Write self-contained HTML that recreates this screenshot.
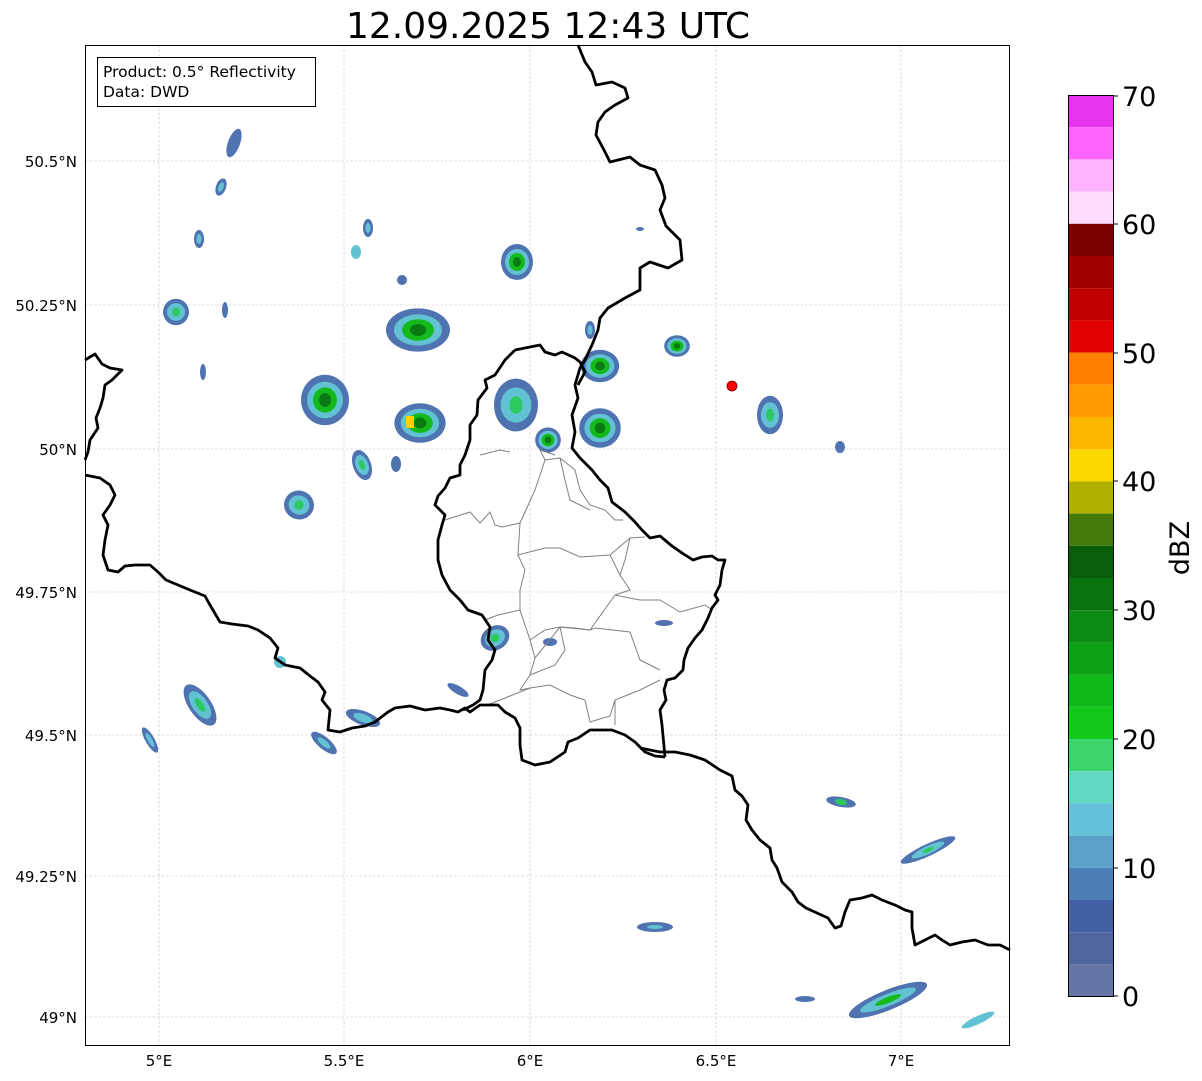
<!DOCTYPE html>
<html><head><meta charset="utf-8"><style>
html,body{margin:0;padding:0;background:#fff;width:1202px;height:1081px;overflow:hidden;font-family:"DejaVu Sans","Liberation Sans",sans-serif}
</style></head><body>
<svg width="1202" height="1081" viewBox="0 0 1202 1081" xmlns="http://www.w3.org/2000/svg" style="position:absolute;left:0;top:0">
<defs>
<g id="b3"><ellipse rx="16" ry="18" fill="#4f72b0"/><ellipse rx="12" ry="13" fill="#62c2d4"/><ellipse rx="8" ry="9" fill="#14b91c"/><ellipse rx="4" ry="5" fill="#0a7a12"/></g>
<g id="b2"><ellipse rx="10" ry="12" fill="#4f72b0"/><ellipse rx="7" ry="8" fill="#62c2d4"/><ellipse rx="3" ry="4" fill="#2cc860"/></g>
<g id="b1"><ellipse rx="5" ry="9" fill="#4f72b0"/><ellipse rx="2.5" ry="5" fill="#62c2d4"/></g>
</defs>
<text x="548" y="38" font-size="36" text-anchor="middle" font-family="DejaVu Sans, sans-serif">12.09.2025 12:43 UTC</text>
<g stroke="#bdbdbd" stroke-width="0.6" stroke-dasharray="2.5,2">
<line x1="159" y1="45" x2="159" y2="1046"/><line x1="344" y1="45" x2="344" y2="1046"/><line x1="530" y1="45" x2="530" y2="1046"/><line x1="716" y1="45" x2="716" y2="1046"/><line x1="901" y1="45" x2="901" y2="1046"/>
<line x1="85" y1="161" x2="1010" y2="161"/><line x1="85" y1="305" x2="1010" y2="305"/><line x1="85" y1="449" x2="1010" y2="449"/><line x1="85" y1="592" x2="1010" y2="592"/><line x1="85" y1="735" x2="1010" y2="735"/><line x1="85" y1="876" x2="1010" y2="876"/><line x1="85" y1="1017" x2="1010" y2="1017"/>
</g>
<g>
<g transform="translate(234,143) rotate(20)"><ellipse rx="6" ry="15" fill="#4f72b0"/></g>
<g transform="translate(221,187) rotate(20)"><use href="#b1"/></g>
<g transform="translate(199,239)"><use href="#b1"/></g>
<g transform="translate(176,312) scale(1.3,1.1)"><use href="#b2"/></g>
<g transform="translate(225,310)"><ellipse rx="3" ry="8" fill="#4f72b0"/></g>
<g transform="translate(203,372)"><ellipse rx="3" ry="8" fill="#4f72b0"/></g>
<g transform="translate(368,228)"><use href="#b1"/></g>
<g transform="translate(356,252)"><ellipse rx="5" ry="7" fill="#62c2d4"/></g>
<g transform="translate(402,280)"><ellipse rx="5" ry="5" fill="#4f72b0"/></g>
<g transform="translate(517,262)"><use href="#b3"/></g>
<g transform="translate(418,330) scale(2,1.2)"><use href="#b3"/></g>
<g transform="translate(325,400) scale(1.5,1.4)"><use href="#b3"/></g>
<g transform="translate(362,465) rotate(-20) scale(0.9,1.3)"><use href="#b2"/></g>
<g transform="translate(420,423) scale(1.6,1.1)"><use href="#b3"/></g>
<rect x="406" y="416" width="8" height="12" fill="#ffd000"/>
<g transform="translate(396,464)"><ellipse rx="5" ry="8" fill="#4f72b0"/></g>
<g transform="translate(516,405) scale(2.2,2.2)"><use href="#b2"/></g>
<g transform="translate(548,440)"><use href="#b3" transform="scale(0.8,0.7)"/></g>
<g transform="translate(600,366) scale(1.2,0.9)"><use href="#b3"/></g>
<g transform="translate(600,428) scale(1.3,1.1)"><use href="#b3"/></g>
<g transform="translate(590,330)"><use href="#b1"/></g>
<g transform="translate(677,346) scale(0.8,0.6)"><use href="#b3"/></g>
<g transform="translate(770,415) scale(1.3,1.6)"><use href="#b2"/></g>
<g transform="translate(840,447)"><ellipse rx="5" ry="6" fill="#4f72b0"/></g>
<g transform="translate(299,505) rotate(15) scale(1.5,1.2)"><use href="#b2"/></g>
<g transform="translate(495,638) rotate(-30) scale(1.5,1)"><use href="#b2"/></g>
<g transform="translate(550,642)"><ellipse rx="7" ry="4" fill="#4f72b0"/></g>
<g transform="translate(664,623)"><ellipse rx="9" ry="3" fill="#4f72b0"/></g>
<g transform="translate(280,662)"><ellipse rx="6" ry="6" fill="#62c2d4"/></g>
<g transform="translate(458,690) rotate(30)"><ellipse rx="12" ry="4" fill="#4f72b0"/></g>
<g transform="translate(363,718) rotate(20)"><ellipse rx="18" ry="7" fill="#4f72b0"/><ellipse rx="10" ry="4" fill="#62c2d4"/></g>
<g transform="translate(324,743) rotate(40)"><ellipse rx="16" ry="6" fill="#4f72b0"/><ellipse rx="8" ry="3" fill="#62c2d4"/></g>
<g transform="translate(200,705) rotate(-35) scale(1.1,2)"><use href="#b2"/></g>
<g transform="translate(150,740) rotate(-30) scale(0.9,1.6)"><use href="#b1"/></g>
<g transform="translate(841,802) rotate(10)"><ellipse rx="15" ry="5" fill="#4f72b0"/><ellipse rx="6" ry="3" fill="#2cc860"/></g>
<g transform="translate(928,850) rotate(-25)"><ellipse rx="30" ry="6" fill="#4f72b0"/><ellipse rx="18" ry="4" fill="#62c2d4"/><ellipse rx="6" ry="2" fill="#2cc860"/></g>
<g transform="translate(655,927)"><ellipse rx="18" ry="5" fill="#4f72b0"/><ellipse rx="8" ry="2" fill="#62c2d4"/></g>
<g transform="translate(805,999)"><ellipse rx="10" ry="3" fill="#4f72b0"/></g>
<g transform="translate(888,1000) rotate(-22)"><ellipse rx="42" ry="10" fill="#4f72b0"/><ellipse rx="30" ry="6" fill="#62c2d4"/><ellipse rx="14" ry="3" fill="#14b91c"/></g>
<g transform="translate(978,1020) rotate(-25)"><ellipse rx="18" ry="4" fill="#62c2d4"/></g>
<g transform="translate(640,229)"><ellipse rx="4" ry="2" fill="#4f72b0"/></g>
</g>
<g fill="none" stroke="#808080" stroke-width="1">
<polyline points="445,520 470,512 480,523 490,512 495,525 502,527 520,523"/>
<polyline points="520,523 518,555 545,548 560,548 580,557 610,555 630,538 645,537"/>
<polyline points="520,523 535,490 545,460 560,458 575,470 580,490 590,505 605,510 615,520 623,520"/>
<polyline points="560,458 565,480 570,500 590,510"/>
<polyline points="545,460 540,450 555,455"/>
<polyline points="518,555 525,570 520,590 520,610 530,640 535,658 560,627 590,630 615,595 640,600 660,600 680,612 705,605 712,610"/>
<polyline points="485,620 498,615 520,610"/>
<polyline points="530,640 545,630 560,627"/>
<polyline points="630,538 625,560 620,575 630,590 615,595"/>
<polyline points="610,555 620,575"/>
<polyline points="560,627 575,628 590,630 595,628 630,632 640,660 660,670"/>
<polyline points="535,658 530,675 520,690 530,688 550,685 570,695 585,700 590,722 610,716 615,700 640,690 660,680"/>
<polyline points="487,705 500,700 530,688"/>
<polyline points="560,627 565,650 555,665 530,675"/>
<polyline points="615,700 615,725"/>
<polyline points="480,455 500,450 510,452"/>
</g>
<g fill="none" stroke="#000" stroke-width="2.8" stroke-linejoin="round">
<polyline points="578,45 585,62 592,72 596,85 612,82 625,88 628,98 615,105 605,112 598,122 596,135 604,150 610,162 630,157 640,165 655,170 662,185 665,198 660,210 666,226 680,240 682,260 668,268 650,262 640,268 640,290 625,298 608,308 600,318 598,330 592,345 585,360 580,368 575,385 578,398 572,415 575,432 572,448 580,458 592,470 600,480 608,488 612,502 625,512 635,522 642,530 650,538 660,536 672,546 682,553 693,560 702,557 712,556 718,560 725,560 722,570 720,585 715,595 718,600 712,608 708,618 702,630 695,638 688,648 684,660 683,670 675,678 667,680 664,690 666,700 660,710 662,725 665,757"/>
<polyline points="640,748 660,752 675,752 690,755 705,760 720,770 732,776 735,790 742,796 748,805 746,820 752,830 760,840 770,848 772,860 777,868 782,882 792,892 798,902 806,908 817,913 828,918 835,928 841,926 845,912 850,900 862,898 872,895 882,900 895,905 905,910 912,912 912,928 915,945 925,940 935,935 942,940 950,945 962,942 975,940 988,945 1000,945 1010,950"/>
<polyline points="515,350 525,348 540,345 545,352 555,355 562,352 575,358 580,362 585,372 578,385"/>
<polyline points="515,350 505,360 495,375 485,380 487,388 478,400 477,415 470,425 470,440 465,455 460,465 460,475 450,478 445,488 438,496 435,505 445,515 442,525 438,540 438,560 442,575 450,590 460,600 468,610 482,615 490,627 488,640 495,650 492,660 485,670 483,690 480,700 473,705 463,710"/>
<polyline points="85,360 95,354 102,364 110,368 122,370 112,380 105,385 103,398 100,408 96,418 98,428 90,440 88,452 85,460"/>
<polyline points="85,475 100,478 110,485 115,495 110,505 103,515 108,525 105,540 103,555 108,570 118,572 125,566 135,565 150,565 158,572 166,580 178,585 190,590 205,596 210,605 220,622 232,624 248,626 258,630 270,638 278,648 275,658 285,665 300,668 310,676 318,682 325,692 322,700 330,710 328,730 340,732 352,728 365,726 375,722 388,712 395,708 410,706 425,710 440,708 450,710 458,712 465,708 470,712 480,705 488,705 498,705 505,712 515,718 520,728 520,745 522,760 535,765 550,762 565,752 568,742 578,738 590,730 600,730 612,730 625,735 635,742 645,752 655,756 665,757"/>
</g>
<circle cx="732" cy="386" r="5" fill="#ff0000" stroke="#700" stroke-width="0.8"/>
<rect x="85.5" y="45.5" width="924" height="1000" fill="none" stroke="#000" stroke-width="1"/>
<rect x="97.5" y="57.5" width="218" height="49" fill="#fff" stroke="#000" stroke-width="1"/>
<text x="103" y="77" font-size="15.5">Product: 0.5° Reflectivity</text>
<text x="103" y="97" font-size="15.5">Data: DWD</text>
<g font-size="15" text-anchor="middle">
<text x="159" y="1066">5°E</text><text x="344" y="1066">5.5°E</text><text x="530" y="1066">6°E</text><text x="716" y="1066">6.5°E</text><text x="901" y="1066">7°E</text>
</g>
<g font-size="15" text-anchor="end">
<text x="77" y="167">50.5°N</text><text x="77" y="311">50.25°N</text><text x="77" y="455">50°N</text><text x="77" y="598">49.75°N</text><text x="77" y="741">49.5°N</text><text x="77" y="882">49.25°N</text><text x="77" y="1023">49°N</text>
</g>
<g stroke="none">
<rect x="1068" y="95" width="45" height="32.2" fill="#e834ee"/>
<rect x="1068" y="127.2" width="45" height="32.2" fill="#ff66ff"/>
<rect x="1068" y="159.4" width="45" height="32.2" fill="#ffb2ff"/>
<rect x="1068" y="191.6" width="45" height="32.2" fill="#ffdcff"/>
<rect x="1068" y="223.8" width="45" height="32.2" fill="#780000"/>
<rect x="1068" y="256" width="45" height="32.2" fill="#a00000"/>
<rect x="1068" y="288.2" width="45" height="32.2" fill="#c00000"/>
<rect x="1068" y="320.4" width="45" height="32.2" fill="#e20000"/>
<rect x="1068" y="352.6" width="45" height="32.2" fill="#ff8000"/>
<rect x="1068" y="384.8" width="45" height="32.2" fill="#ff9c00"/>
<rect x="1068" y="417" width="45" height="32.2" fill="#ffb800"/>
<rect x="1068" y="449.2" width="45" height="32.2" fill="#ffd800"/>
<rect x="1068" y="481.4" width="45" height="32.2" fill="#b0b000"/>
<rect x="1068" y="513.6" width="45" height="32.2" fill="#467a0a"/>
<rect x="1068" y="545.8" width="45" height="32.2" fill="#0a5e0a"/>
<rect x="1068" y="578" width="45" height="32.2" fill="#0a720e"/>
<rect x="1068" y="610.2" width="45" height="32.2" fill="#0c8a12"/>
<rect x="1068" y="642.4" width="45" height="32.2" fill="#0ea014"/>
<rect x="1068" y="674.6" width="45" height="32.2" fill="#10b818"/>
<rect x="1068" y="706.8" width="45" height="32.2" fill="#12c81a"/>
<rect x="1068" y="739" width="45" height="32.2" fill="#3cd46c"/>
<rect x="1068" y="771.2" width="45" height="32.2" fill="#60d8c2"/>
<rect x="1068" y="803.4" width="45" height="32.2" fill="#64c2dc"/>
<rect x="1068" y="835.6" width="45" height="32.2" fill="#5aa0c8"/>
<rect x="1068" y="867.8" width="45" height="32.2" fill="#4c7eb6"/>
<rect x="1068" y="900" width="45" height="32.2" fill="#4460a4"/>
<rect x="1068" y="932.2" width="45" height="32.2" fill="#50669e"/>
<rect x="1068" y="964.4" width="45" height="31.6" fill="#6476a8"/>
</g>
<rect x="1068.5" y="95.5" width="45" height="901" fill="none" stroke="#000" stroke-width="1"/>
<g stroke="#000" stroke-width="1"><line x1="1113" y1="96" x2="1118" y2="96"/><line x1="1113" y1="224" x2="1118" y2="224"/><line x1="1113" y1="353" x2="1118" y2="353"/><line x1="1113" y1="481" x2="1118" y2="481"/><line x1="1113" y1="610" x2="1118" y2="610"/><line x1="1113" y1="739" x2="1118" y2="739"/><line x1="1113" y1="868" x2="1118" y2="868"/><line x1="1113" y1="996" x2="1118" y2="996"/></g>
<g font-size="27">
<text x="1122" y="106">70</text><text x="1122" y="234">60</text><text x="1122" y="363">50</text><text x="1122" y="491">40</text><text x="1122" y="620">30</text><text x="1122" y="749">20</text><text x="1122" y="878">10</text><text x="1122" y="1006">0</text>
</g>
<text transform="translate(1189,548) rotate(-90)" font-size="27" text-anchor="middle">dBZ</text>
</svg>
</body></html>
